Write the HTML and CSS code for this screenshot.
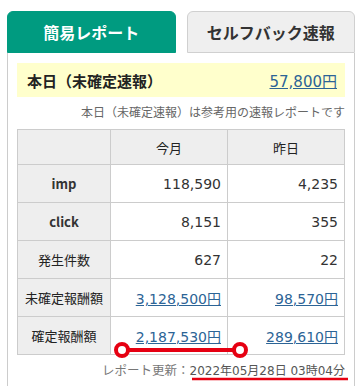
FILE: index.html
```html
<!DOCTYPE html>
<html lang="ja">
<head>
    <meta charset="UTF-8">
    <meta name="viewport" content="width=device-width, initial-scale=1.0">
    <title>簡易レポート</title>
    <link rel="stylesheet" href="styles.css">
</head>
<body>
    <div class="report">
        <!-- タブ -->
        <div class="tabs">
            <div class="tab tab-active">簡易レポート</div>
            <div class="tab">セルフバック速報</div>
        </div>

        <div class="panel">
            <!-- 本日の速報 -->
            <div class="today">
                <span class="today-label">本日（未確定速報）</span>
                <a href="#" class="today-value num">57,800円</a>
            </div>
            <p class="note">本日（未確定速報）は参考用の速報レポートです</p>

            <!-- 集計テーブル -->
            <table class="stats">
                <tr>
                    <th class="corner"></th>
                    <th>今月</th>
                    <th>昨日</th>
                </tr>
                <tr>
                    <th class="latin">imp</th>
                    <td>118,590</td>
                    <td>4,235</td>
                </tr>
                <tr>
                    <th class="latin">click</th>
                    <td>8,151</td>
                    <td>355</td>
                </tr>
                <tr>
                    <th>発生件数</th>
                    <td>627</td>
                    <td>22</td>
                </tr>
                <tr>
                    <th>未確定報酬額</th>
                    <td><a href="#">3,128,500円</a></td>
                    <td><a href="#">98,570円</a></td>
                </tr>
                <tr>
                    <th>確定報酬額</th>
                    <td><a href="#">2,187,530円</a></td>
                    <td><a href="#">289,610円</a></td>
                </tr>
            </table>

            <p class="updated">レポート更新：<span class="updated-date num">2022年05月28日 03時04分</span></p>
        </div>
    </div>

    <!-- 赤い注釈 -->
    <svg class="marker" width="362" height="386" viewBox="0 0 362 386">
        <line x1="122" y1="350" x2="240" y2="350" stroke="#e60012" stroke-width="4"/>
        <circle cx="122" cy="350" r="6" fill="#fff" stroke="#e60012" stroke-width="4"/>
        <circle cx="240" cy="350" r="6" fill="#fff" stroke="#e60012" stroke-width="4"/>
        <line x1="192" y1="379" x2="348" y2="379" stroke="#e60012" stroke-width="2.5"/>
    </svg>
</body>
</html>
```

FILE: styles.css
```css
body {
    margin: 0;
    padding: 0;
    background: #fff;
    font-family: "Noto Sans CJK JP", "Noto Sans", sans-serif;
    color: #333;
    position: relative;
    height: 386px;
    overflow: hidden;
}

.report {
    padding: 11px 7px 0 7px;
}

/* 数字は幅広のフォントで */
.num,
.stats td {
    font-family: "DejaVu Sans", "Noto Sans CJK JP", sans-serif;
}

/* タブ */
.tabs {
    display: flex;
    gap: 11px;
}

.tab {
    flex: 1;
    height: 40px;
    display: flex;
    justify-content: center;
    align-items: center;
    font-size: 16px;
    font-weight: bold;
    background: #efefef;
    border: 1px solid #d0d0d0;
    border-radius: 6px 6px 0 0;
    color: #333;
}

.tab-active {
    background: #009b80;
    border-color: #009b80;
    color: #fff;
}

/* パネル */
.panel {
    box-sizing: border-box;
    height: 334px;
    border: 1px solid #ccc;
    border-top: none;
    border-bottom: none;
    padding: 10px 9px 0 9px;
}

.today {
    background: #ffffcc;
    height: 34px;
    display: flex;
    justify-content: space-between;
    align-items: center;
    padding: 0 8px 0 10px;
}

.today-label {
    font-size: 15px;
    font-weight: bold;
    color: #222;
}

.today-value {
    font-size: 15px;
    color: #2c6496;
}

.note {
    margin: 7px 0 9px 0;
    text-align: right;
    font-size: 12px;
    line-height: 16px;
    color: #666;
}

/* テーブル */
.stats {
    width: 100%;
    border-collapse: collapse;
    font-size: 13px;
    table-layout: fixed;
}

.stats th,
.stats td {
    border: 1px solid #ccc;
    height: 37px;
    padding: 0 6px;
}

.stats tr:first-child th {
    height: 34px;
}

.stats th {
    background: #eee;
    font-weight: normal;
    text-align: center;
    color: #222;
}

.stats th.latin {
    font-weight: bold;
    color: #333;
}

.stats .corner {
    width: 80px;
}

.stats td {
    font-size: 14px;
    text-align: right;
    background: #fff;
    color: #333;
}

.stats a {
    color: #2c6496;
}

.updated {
    margin: 7px 0 0 0;
    text-align: right;
    font-size: 12.5px;
    line-height: 16px;
    color: #777;
}

.updated-date {
    font-size: 12px;
    color: #555;
}

/* 注釈 */
.marker {
    position: absolute;
    top: 0;
    left: 0;
    pointer-events: none;
}
```
